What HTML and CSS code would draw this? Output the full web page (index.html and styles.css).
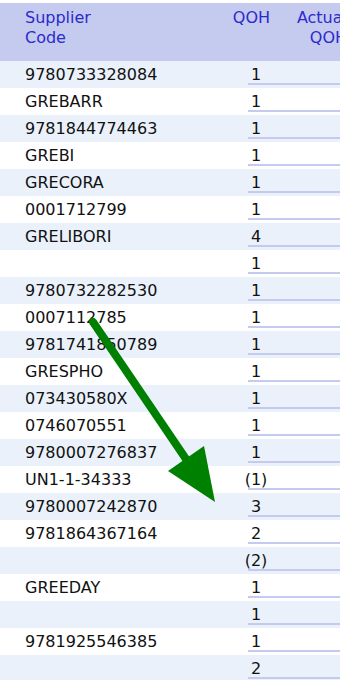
FILE: index.html
```html
<!DOCTYPE html>
<html>
<head>
<meta charset="utf-8">
<link rel="stylesheet" href="styles.css">
</head>
<body>
<div class="sheet">
  <div class="head">
    <div class="h-code">Supplier<br>Code</div>
    <div class="h-qoh">QOH</div>
    <div class="h-actual">Actual<br>QOH</div>
  </div>
  <div class="rows">
    <div class="row"><div class="code">9780733328084</div><div class="qoh">1</div><div class="act"></div></div>
    <div class="row"><div class="code">GREBARR</div><div class="qoh">1</div><div class="act"></div></div>
    <div class="row"><div class="code">9781844774463</div><div class="qoh">1</div><div class="act"></div></div>
    <div class="row"><div class="code">GREBI</div><div class="qoh">1</div><div class="act"></div></div>
    <div class="row"><div class="code">GRECORA</div><div class="qoh">1</div><div class="act"></div></div>
    <div class="row"><div class="code">0001712799</div><div class="qoh">1</div><div class="act"></div></div>
    <div class="row"><div class="code">GRELIBORI</div><div class="qoh">4</div><div class="act"></div></div>
    <div class="row"><div class="code"></div><div class="qoh">1</div><div class="act"></div></div>
    <div class="row"><div class="code">9780732282530</div><div class="qoh">1</div><div class="act"></div></div>
    <div class="row"><div class="code">0007112785</div><div class="qoh">1</div><div class="act"></div></div>
    <div class="row"><div class="code">9781741850789</div><div class="qoh">1</div><div class="act"></div></div>
    <div class="row"><div class="code">GRESPHO</div><div class="qoh">1</div><div class="act"></div></div>
    <div class="row"><div class="code">073430580X</div><div class="qoh">1</div><div class="act"></div></div>
    <div class="row"><div class="code">0746070551</div><div class="qoh">1</div><div class="act"></div></div>
    <div class="row"><div class="code">9780007276837</div><div class="qoh">1</div><div class="act"></div></div>
    <div class="row"><div class="code">UN1-1-34333</div><div class="qoh">(1)</div><div class="act"></div></div>
    <div class="row"><div class="code">9780007242870</div><div class="qoh">3</div><div class="act"></div></div>
    <div class="row"><div class="code">9781864367164</div><div class="qoh">2</div><div class="act"></div></div>
    <div class="row"><div class="code"></div><div class="qoh">(2)</div><div class="act"></div></div>
    <div class="row"><div class="code">GREEDAY</div><div class="qoh">1</div><div class="act"></div></div>
    <div class="row"><div class="code"></div><div class="qoh">1</div><div class="act"></div></div>
    <div class="row"><div class="code">9781925546385</div><div class="qoh">1</div><div class="act"></div></div>
    <div class="row"><div class="code"></div><div class="qoh">2</div><div class="act"></div></div>
  </div>
  <svg class="arrow" width="340" height="680" viewBox="0 0 340 680">
    <line x1="93" y1="322" x2="188" y2="462" stroke="#008000" stroke-width="8" stroke-linecap="round"/>
    <polygon points="168,471 204,446 215,502" fill="#008000"/>
  </svg>
</div>
</body>
</html>
```
FILE: styles.css
```css
html, body {
  margin: 0;
  padding: 0;
  background: #fff;
}
body {
  width: 340px;
  height: 680px;
  overflow: hidden;
  font-family: "DejaVu Sans", Verdana, sans-serif;
  font-size: 16px;
  color: #111;
}
.sheet {
  position: relative;
  width: 360px;
  padding-top: 3px;
}
.head {
  display: grid;
  grid-template-columns: 232px 38px 77px 1fr;
  height: 58px;
  box-sizing: border-box;
  padding-top: 5px;
  background: #c5caef;
  color: #2b2bcc;
  line-height: 20px;
}
.h-code { padding-left: 25px; }
.h-qoh { text-align: right; }
.h-actual { text-align: right; }
.rows {
  display: flex;
  flex-direction: column;
}
.row {
  display: grid;
  grid-template-columns: 248px 16px 1fr;
  height: 27px;
}
.row:nth-child(odd) { background: #eaf1fa; }
.code, .qoh, .act {
  height: 24px;
  box-sizing: border-box;
  padding-top: 5px;
  line-height: 17px;
  white-space: nowrap;
}
.code { padding-left: 25px; }
.qoh {
  display: flex;
  justify-content: center;
  border-bottom: 2px solid #c5caef;
}
.act {
  border-bottom: 2px solid #c5caef;
}
.arrow {
  position: absolute;
  left: 0;
  top: 0;
}
```
